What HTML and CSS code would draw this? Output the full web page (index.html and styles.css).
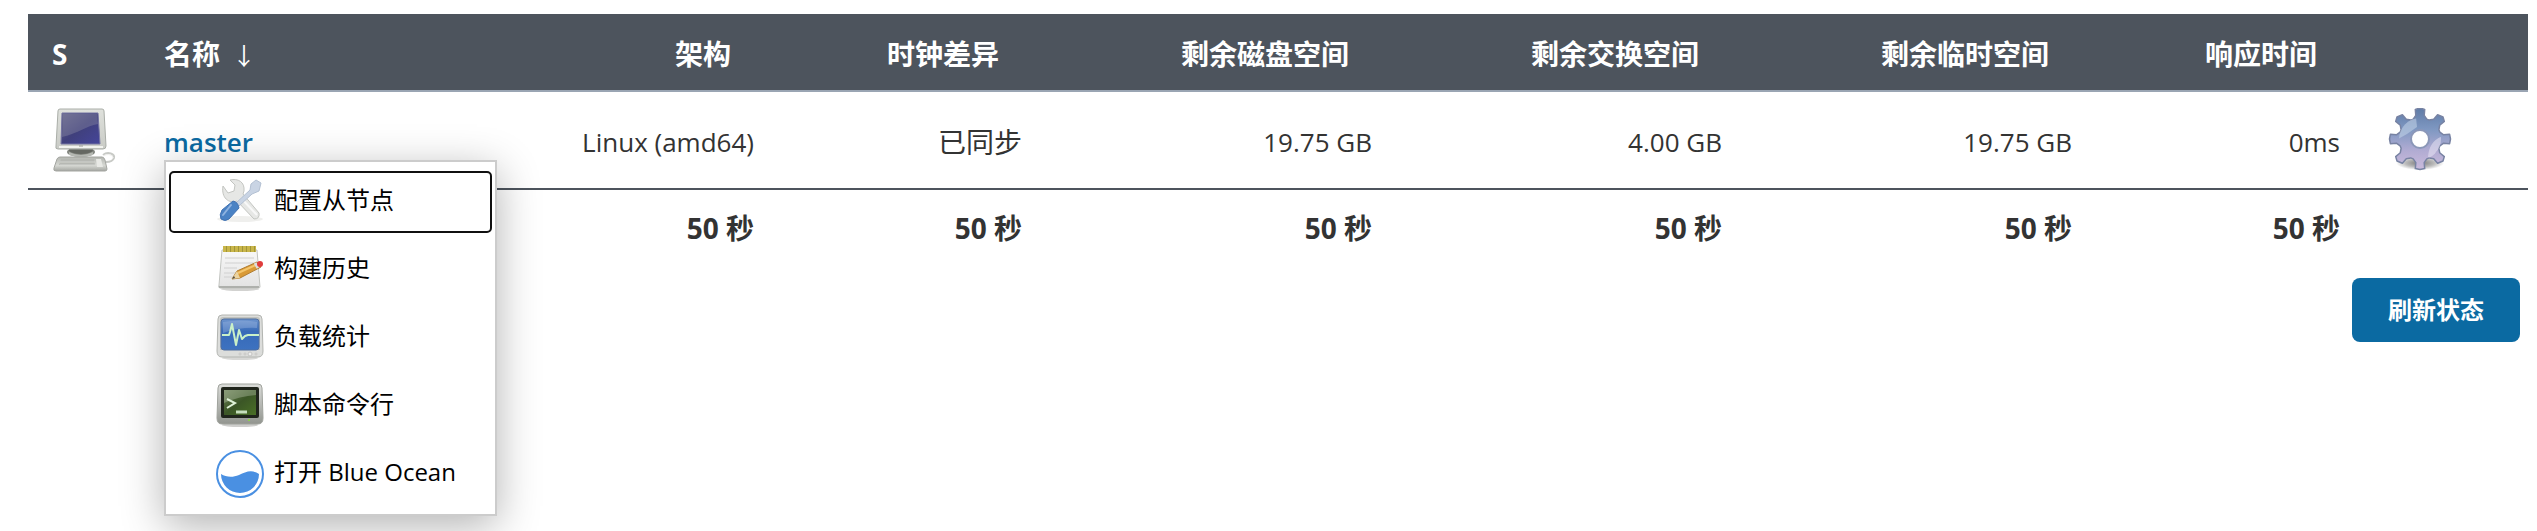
FILE: index.html
```html
<!DOCTYPE html>
<html lang="zh-CN">
<head>
<meta charset="utf-8">
<meta name="viewport" content="width=device-width, initial-scale=1">
<title>节点列表</title>
<link rel="stylesheet" href="styles.css">
</head>
<body>
<main class="page">
  <table class="nodes">
    <colgroup>
      <col class="col-status"><col class="col-name"><col class="col-arch"><col class="col-time">
      <col class="col-space"><col class="col-space"><col class="col-space"><col class="col-time"><col class="col-action">
    </colgroup>
    <thead>
      <tr>
        <th scope="col">S</th>
        <th scope="col">名称<span class="sort-arrow">↓</span></th>
        <th scope="col" class="num">架构</th>
        <th scope="col" class="num">时钟差异</th>
        <th scope="col" class="num">剩余磁盘空间</th>
        <th scope="col" class="num">剩余交换空间</th>
        <th scope="col" class="num">剩余临时空间</th>
        <th scope="col" class="num">响应时间</th>
        <td></td>
      </tr>
    </thead>
    <tbody>
      <tr class="node">
        <td>
          <svg class="icon-large" viewBox="0 0 64 64" role="img" aria-label="在线">
            <defs>
              <linearGradient id="case" x1="0" y1="0" x2="0" y2="1"><stop offset="0" stop-color="#dfe1dc"/><stop offset="1" stop-color="#c9cbc6"/></linearGradient>
              <linearGradient id="screen" x1="0" y1="0" x2="1" y2="1"><stop offset="0" stop-color="#66668c"/><stop offset=".5" stop-color="#40407c"/><stop offset="1" stop-color="#45459a"/></linearGradient>
              <linearGradient id="base" x1="0" y1="0" x2="0" y2="1"><stop offset="0" stop-color="#b4b6b1"/><stop offset=".6" stop-color="#d6d8d3"/><stop offset="1" stop-color="#a4a6a1"/></linearGradient>
            </defs>
            <path d="M51 47c5-4 12-1 11 3-1 3-5 4-8 4" fill="none" stroke="#c8cac6" stroke-width="2"/>
            <path d="M51 48c5-3 10-1 10 2" fill="none" stroke="#eeeeec" stroke-width="1"/>
            <ellipse cx="29" cy="44" rx="14" ry="5" fill="#858882"/>
            <ellipse cx="29" cy="42" rx="12" ry="4" fill="#656862"/>
            <path d="M17 44q12 6 24 0v3q-12 4-24 0z" fill="#b5b8b2"/>
            <path d="M8 49h42q2 0 3 3l2 9q0 2-2 2H4q-3 0-2-3l3-9q1-2 3-2z" fill="url(#base)" stroke="#a3a5a0"/>
            <path d="M9 51h33l1 6H7z" fill="#b6b8b3"/>
            <path d="M8 54h35M8 57h35" stroke="#d3d5d0"/>
            <path d="M44 51h5l2 8h-6z" fill="#e8e9e5"/>
            <path d="M8 1h42q2 0 2 2l2 35q0 3-3 3H6q-3 0-2-3L6 3q0-2 2-2z" fill="url(#case)" stroke="#aaaea8"/>
            <path d="M7 39h44" stroke="#f2f3ef" stroke-width="2"/>
            <path d="M10 5h36l2 31H9z" fill="url(#screen)" stroke="#7575a2"/>
            <path d="M11 6h34l1 10C34 18 27 25 10 29z" fill="#8c8ca6" opacity=".4"/>
            <path d="M27 38h4" stroke="#9a9c98"/>
          </svg>
        </td>
        <td class="name">
          <div class="node-name">
            <a class="node-link" href="#master">master</a>
            <nav class="menu" aria-label="master">
              <a class="menu-item menu-item-focused" href="#configure">
                <svg class="icon" viewBox="0 0 48 48" aria-hidden="true">
                  <ellipse cx="24" cy="41" rx="23" ry="3" fill="#efefed"/>
                  <path d="M7 8l5 7 6-2 1-6-5-5c8-2 15 2 14 11l-1 3 16 19q1 6-5 6L21 23C13 26 5 20 7 8z" fill="#e6e7e5" stroke="#c3c5c1" stroke-linejoin="round"/>
                  <path d="M25 20l16 17" stroke="#f8f8f8" stroke-width="2"/>
                  <path d="M20 25L34 12l1-6 5-4 5 3-2 8-7 3L23 28z" fill="#c9d4e4" stroke="#b3c0d2"/>
                  <path d="M17 23q5 1 6 7L13 41q-4 3-8 0-2-4 1-9z" fill="#4a82c4" stroke="#4273b3"/>
                  <path d="M15 27L7 37" stroke="#8fb3e0" stroke-width="2" stroke-linecap="round"/>
                </svg>
                <span>配置从节点</span>
              </a>
              <a class="menu-item" href="#builds">
                <svg class="icon" viewBox="0 0 48 48" aria-hidden="true">
                  <defs><linearGradient id="paper" x1="0" y1="0" x2="0" y2="1"><stop offset="0" stop-color="#f8f8f8"/><stop offset="1" stop-color="#e2e2e2"/></linearGradient></defs>
                  <ellipse cx="24" cy="43" rx="19" ry="2" fill="#d2d2d0"/>
                  <path d="M6 4h35l3 37q0 1-2 1H4q-2 0-1-3z" fill="url(#paper)" stroke="#c2c4c0"/>
                  <path d="M3 41h40" stroke="#aeb0ac" stroke-width="2"/>
                  <path d="M7 3h33" stroke="#a0943a" stroke-width="6"/>
                  <path d="M7 3h33" stroke="#c9b64a" stroke-width="6" stroke-dasharray="3 1"/>
                  <path d="M9 12h29M9 17h29M8 22h13M8 27h16M8 31h12" stroke="#d0d0d0"/>
                  <path d="M16 33l5-8 20-9 4 5-21 11z" fill="#d99a36" stroke="#b07c30"/>
                  <path d="M22 27l20-9" stroke="#f4c66d" stroke-width="2"/>
                  <path d="M16 33l5-8 3 7z" fill="#ead3a2"/><path d="M16 33l2-3 1 2z" fill="#444"/>
                  <path d="M39 17l3 5" stroke="#ddd" stroke-width="3"/>
                  <ellipse cx="44" cy="18" rx="3" ry="3" fill="#e03c3c"/>
                </svg>
                <span>构建历史</span>
              </a>
              <a class="menu-item" href="#load">
                <svg class="icon" viewBox="0 0 48 48" aria-hidden="true">
                  <defs><linearGradient id="blue" x1="0" y1="0" x2="0" y2="1"><stop offset="0" stop-color="#6d94cd"/><stop offset=".4" stop-color="#376ab8"/><stop offset="1" stop-color="#3d72c0"/></linearGradient></defs>
                  <ellipse cx="24" cy="44" rx="18" ry="2" fill="#d8d8d6"/>
                  <path d="M6 1h36q4 0 4 4l1 32q0 6-5 6H6q-5 0-5-6L2 5q0-4 4-4z" fill="#dcdddb" stroke="#b3b5b1"/>
                  <path d="M7 3h34q3 0 3 3v30H4V6q0-3 3-3z" fill="#c0c2be"/>
                  <rect x="5" y="5" width="38" height="31" rx="3" fill="url(#blue)" stroke="#4f6ea0"/>
                  <path d="M7 8q17-3 34 0v6Q24 13 7 19z" fill="#a8c1e6" opacity=".35"/>
                  <path d="M6 21h7l1-3 2-8 4 21 3-15 3 9 3-3 3-1h11" fill="none" stroke="#c9f0c8" stroke-width="2" stroke-linejoin="round"/>
                  <g fill="#eee" stroke="#c4c4c2"><circle cx="24" cy="40" r="1"/><circle cx="29" cy="40" r="1"/><circle cx="34" cy="40" r="2"/><circle cx="40" cy="40" r="1"/></g>
                </svg>
                <span>负载统计</span>
              </a>
              <a class="menu-item" href="#script">
                <svg class="icon" viewBox="0 0 48 48" aria-hidden="true">
                  <defs>
                    <linearGradient id="shell" x1="0" y1="0" x2="0" y2="1"><stop offset="0" stop-color="#dcddda"/><stop offset="1" stop-color="#92958f"/></linearGradient>
                    <linearGradient id="green" x1="0" y1="0" x2="1" y2="1"><stop offset="0" stop-color="#6b8056"/><stop offset=".5" stop-color="#3b5626"/><stop offset="1" stop-color="#4a7026"/></linearGradient>
                  </defs>
                  <ellipse cx="24" cy="43" rx="18" ry="2" fill="#cececc"/>
                  <path d="M6 2h36q4 0 4 4l1 30q0 6-5 6H6q-5 0-5-6L2 6q0-4 4-4z" fill="url(#shell)" stroke="#a0a39d"/>
                  <rect x="5" y="5" width="38" height="31" rx="2" fill="#20251c"/>
                  <path d="M8 8h32v25H8z" fill="url(#green)"/>
                  <path d="M8 8h32v5Q24 14 8 21z" fill="#c7d2bb" opacity=".35"/>
                  <path d="M11 17l8 4-8 5" fill="none" stroke="#dff2d7" stroke-width="2"/>
                  <path d="M20 30h11" stroke="#c6dfbd" stroke-width="3"/>
                  <circle cx="33" cy="38" r="1" fill="#8ae234"/>
                </svg>
                <span>脚本命令行</span>
              </a>
              <a class="menu-item" href="#blue">
                <svg class="icon" viewBox="0 0 48 48" aria-hidden="true">
                  <circle cx="24" cy="24" r="23" fill="#fff" stroke="#4a90e2" stroke-width="2"/>
                  <path d="M5 24c5 3 11 4 18 1s12-6 20-1a19 19 0 0 1-38 0z" fill="#4a90e2"/>
                </svg>
                <span>打开 Blue Ocean</span>
              </a>
            </nav>
          </div>
        </td>
        <td class="num latin">Linux (amd64)</td>
        <td class="num">已同步</td>
        <td class="num latin">19.75 GB</td>
        <td class="num latin">4.00 GB</td>
        <td class="num latin">19.75 GB</td>
        <td class="num latin">0ms</td>
        <td>
          <a class="gear" href="#settings" aria-label="配置">
            <svg class="icon-large" viewBox="0 0 64 64" aria-hidden="true">
              <defs>
                <linearGradient id="steel" x1="0" y1="0" x2="0" y2="1"><stop offset="0" stop-color="#5f7ba6"/><stop offset=".35" stop-color="#7f98c2"/><stop offset=".7" stop-color="#b2acd3"/><stop offset="1" stop-color="#cabbdc"/></linearGradient>
                <radialGradient id="shade"><stop offset="0" stop-color="#777"/><stop offset=".6" stop-color="#bbb"/><stop offset="1" stop-color="#fff"/></radialGradient>
                <clipPath id="ring"><circle cx="32" cy="31" r="21"/></clipPath>
              </defs>
              <ellipse cx="32" cy="55" rx="24" ry="7" fill="url(#shade)"/>
              <g transform="translate(32 31)">
                <path fill="url(#steel)" stroke="#7883a3" stroke-width="1.5" stroke-linejoin="round" d="M19.9 6.8L18.9 9.3 19.7 13.7 24.3 17.6 23 22 17.6 24.3 13.7 19.7 9.3 18.9 6.8 19.9 4.2 23.6 4.7 29.6 0 30.5-4.7 29.6-4.2 23.6-6.8 19.9-9.3 18.9-13.7 19.7-17.6 24.3-23 22-24.3 17.6-19.7 13.7-18.9 9.3-19.9 6.8-23.6 4.2-29.6 4.7-30.5 0-29.6-4.7-23.6-4.2-19.9-6.8-18.9-9.3-19.7-13.7-24.3-17.6-23-22-17.6-24.3-13.7-19.7-9.3-18.9-6.8-19.9-4.2-23.6-4.7-29.6 0-31 4.7-29.6 4.2-23.6 6.8-19.9 9.3-18.9 13.7-19.7 17.6-24.3 23-22 24.3-17.6 19.7-13.7 18.9-9.3 19.9-6.8 23.6-4.2 29.6-4.7 30.5 0 29.6 4.7 23.6 4.2z"/>
              </g>
              <path d="M10 31l9-5 10-7-1-10-14 2z" fill="#c4d6ea" opacity=".55" clip-path="url(#ring)"/>
              <path d="M40 49q1-18 18-22v10q-11 3-12 14z" fill="#e8e4f4" opacity=".55" clip-path="url(#ring)"/>
              <circle cx="32" cy="31" r="9" fill="#fff" stroke="#8b97b8" stroke-width="2"/>
            </svg>
          </a>
        </td>
      </tr>
    </tbody>
    <tfoot>
      <tr>
        <td></td>
        <td></td>
        <td class="num">50 秒</td>
        <td class="num">50 秒</td>
        <td class="num">50 秒</td>
        <td class="num">50 秒</td>
        <td class="num">50 秒</td>
        <td class="num">50 秒</td>
        <td></td>
      </tr>
    </tfoot>
  </table>
  <div class="actions">
    <button class="refresh" type="button">刷新状态</button>
  </div>
</main>
</body>
</html>
```
FILE: styles.css
```css
* {
  box-sizing: border-box;
}

body {
  margin: 0;
  background: #fff;
  color: #333;
  font-family: "Open Sans", "Noto Sans CJK SC", sans-serif;
  font-size: 28px;
  line-height: 36px;
}

.page {
  min-height: 100vh;
  padding: 14px 9px 0 28px;
}

.nodes {
  width: 100%;
  table-layout: fixed;
  border-collapse: separate;
  border-spacing: 0;
}

.col-status { width: 4.48%; }
.col-name { width: 14.52%; }
.col-arch { width: 11%; }
.col-time { width: 10.72%; }
.col-space { width: 14%; }
.col-action { width: 6.56%; }

.nodes th,
.nodes td {
  padding: 0 24px;
  text-align: left;
  vertical-align: middle;
  white-space: nowrap;
}

.nodes .num {
  text-align: right;
}

.nodes thead th,
.nodes thead td {
  height: 78px;
  padding-top: 4px;
  background: #4d545d;
  border-bottom: 2px solid #9aa5b3;
  color: #fff;
  font-weight: 700;
}

.nodes thead .num {
  padding-right: 47px;
}

.sort-arrow {
  margin-left: 12px;
  font-family: "Noto Sans CJK SC", sans-serif;
  font-size: 24px;
  font-weight: 400;
}

.nodes .node td {
  height: 98px;
  border-bottom: 2px solid #4d545d;
}

.nodes .node .num,
.nodes .node .name {
  padding-top: 4px;
}

.node .latin,
.node .name {
  font-size: 26px;
}

.nodes tfoot td {
  height: 76px;
  font-weight: 700;
}

.icon-large {
  display: block;
  width: 64px;
  height: 64px;
}

.gear {
  display: block;
  width: 64px;
}

.node-name {
  position: relative;
}

.node-link {
  color: #0b6aa2;
  font-weight: 600;
  text-decoration: none;
}

.menu {
  position: absolute;
  top: 100%;
  left: 0;
  z-index: 1;
  min-width: 333px;
  padding: 6px 0;
  background: #fff;
  border: 2px solid #ccc;
  box-shadow: 0 10px 40px rgba(0, 0, 0, 0.3);
}

.menu-item {
  display: flex;
  align-items: center;
  gap: 10px;
  height: 68px;
  padding: 0 24px 0 50px;
  color: #000;
  font-size: 24px;
  text-decoration: none;
}

.menu-item span {
  padding-bottom: 4px;
}

.menu-item-focused {
  outline: 2px solid #101010;
  outline-offset: -5px;
  border-radius: 8px;
}

.icon {
  flex: none;
  width: 48px;
  height: 48px;
}

.actions {
  display: flex;
  justify-content: flex-end;
  padding: 12px 8px 0;
}

.refresh {
  padding: 14px 36px;
  background: #0b6aa2;
  border: 0;
  border-radius: 8px;
  color: #fff;
  font: inherit;
  font-size: 24px;
  font-weight: 700;
}
```
